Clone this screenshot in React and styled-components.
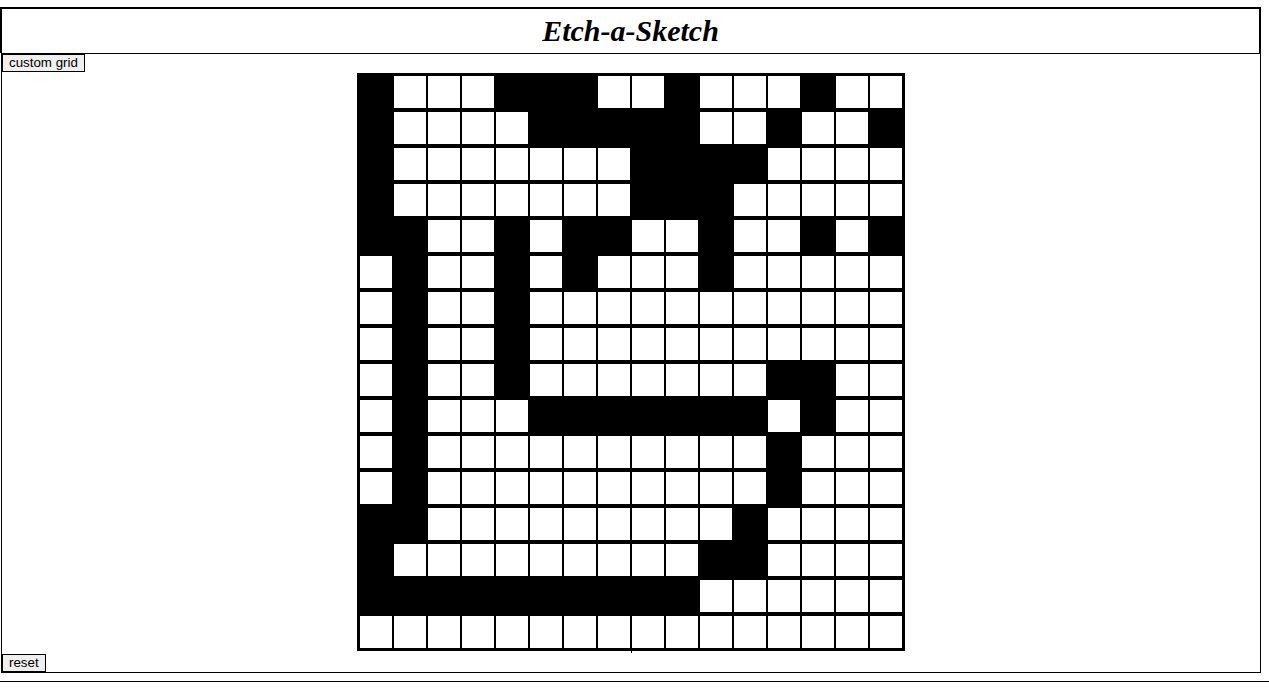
import React from "react";
import styled, { createGlobalStyle } from "styled-components";

const GlobalStyle = createGlobalStyle`
  body {
    margin: 0;
    background: white;
    font-family: "Liberation Serif", serif;
  }
`;

const Header = styled.header`
  box-sizing: border-box;
  margin-top: 7px;
  width: 1261px;
  height: 46px;
  border: 2px solid black;
  border-bottom: none;
  display: flex;
  align-items: center;
  justify-content: center;
`;

const Title = styled.h1`
  margin: 0;
  font-family: "Liberation Serif", serif;
  font-style: italic;
  font-weight: bold;
  font-size: 30px;
`;

const Board = styled.main`
  box-sizing: border-box;
  margin-left: 1px;
  width: 1260px;
  height: 620px;
  border: 1px solid black;
  display: flex;
  flex-direction: column;
`;

const Button = styled.button`
  align-self: flex-start;
  margin: 0;
  margin-top: ${(p) => (p.$bottom ? "auto" : "0")};
  padding: 1px 6px;
  border: 1px solid black;
  border-radius: 0;
  background: #efefef;
  color: black;
  font-family: "Liberation Sans", Arial, sans-serif;
  font-size: 13.333px;
  line-height: 14px;
`;

const Grid = styled.div`
  position: relative;
  align-self: center;
  margin-top: 1px;
  display: grid;
  grid-template-columns: repeat(16, 34px);
  grid-auto-rows: 34px;
  row-gap: 2px;
  border: 2px solid black;
  background: black;

  &::after {
    content: "";
    position: absolute;
    left: 50%;
    bottom: -4px;
    width: 1px;
    height: 4px;
    background: black;
  }
`;

const Cell = styled.div`
  box-sizing: border-box;
  border: 1px solid black;
  background: ${(p) => (p.$on ? "black" : "white")};
`;

const Footer = styled.footer`
  margin-top: 8px;
  border-top: 1px solid black;
  height: 15px;
`;

const PATTERN = [
  "BWWWBBBWWBWWWBWW",
  "BWWWWBBBBBWWBWWB",
  "BWWWWWWWBBBBWWWW",
  "BWWWWWWWBBBWWWWW",
  "BBWWBWBBWWBWWBWB",
  "WBWWBWBWWWBWWWWW",
  "WBWWBWWWWWWWWWWW",
  "WBWWBWWWWWWWWWWW",
  "WBWWBWWWWWWWBBWW",
  "WBWWWBBBBBBBWBWW",
  "WBWWWWWWWWWWBWWW",
  "WBWWWWWWWWWWBWWW",
  "BBWWWWWWWWWBWWWW",
  "BWWWWWWWWWBBWWWW",
  "BBBBBBBBBBWWWWWW",
  "WWWWWWWWWWWWWWWW",
];

export default function App() {
  return (
    <>
      <GlobalStyle />
      <Header>
        <Title>Etch-a-Sketch</Title>
      </Header>
      <Board>
        <Button>custom grid</Button>
        <Grid>
          {PATTERN.map((row, r) =>
            row.split("").map((c, i) => <Cell key={`${r}-${i}`} $on={c === "B"} />)
          )}
        </Grid>
        <Button $bottom>reset</Button>
      </Board>
      <Footer />
    </>
  );
}
